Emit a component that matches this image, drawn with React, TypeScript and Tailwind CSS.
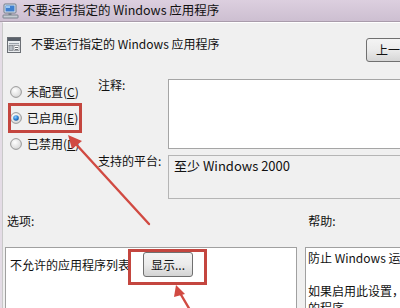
import React from "react";

const font = { fontFamily: '"Noto Sans CJK SC", "Noto Sans", sans-serif' };

function Radio({ checked }: { checked?: boolean }) {
  return (
    <svg width="12" height="12" viewBox="0 0 12 12" className="shrink-0">
      <defs>
        <radialGradient id={checked ? "rg1" : "rg0"} cx="0.4" cy="0.35" r="0.7">
          <stop offset="0" stopColor="#ffffff" />
          <stop offset="1" stopColor="#d4d4d4" />
        </radialGradient>
        <radialGradient id="dot" cx="0.4" cy="0.35" r="0.7">
          <stop offset="0" stopColor="#8fd0ff" />
          <stop offset="0.6" stopColor="#2a7fd4" />
          <stop offset="1" stopColor="#134f8e" />
        </radialGradient>
      </defs>
      <circle cx="6" cy="6" r="5.4" fill={`url(#${checked ? "rg1" : "rg0"})`} stroke="#8e8f8f" strokeWidth="0.9" />
      {checked && <circle cx="6" cy="6" r="2.8" fill="url(#dot)" />}
    </svg>
  );
}

function TitleIcon() {
  return (
    <svg width="17" height="16" viewBox="0 0 17 16">
      <rect x="2" y="1" width="12" height="9" rx="1" fill="#dfe6ee" stroke="#6c7a89" strokeWidth="1" />
      <rect x="3.5" y="2.5" width="9" height="6" fill="#3f7fd0" />
      <rect x="4" y="3" width="4" height="2" fill="#9cc8f3" />
      <rect x="6.5" y="10" width="3" height="2" fill="#7b8794" />
      <rect x="1" y="12" width="15" height="3" rx="0.5" fill="#c6ccd3" stroke="#67717c" strokeWidth="0.8" />
    </svg>
  );
}

function PolicyIcon() {
  return (
    <svg width="14" height="16" viewBox="0 0 14 16">
      <rect x="0.5" y="0.5" width="13" height="15" fill="#e9ecef" stroke="#6b6f75" strokeWidth="1" />
      <rect x="1" y="1" width="12" height="3" fill="#59606a" />
      <rect x="2" y="6" width="10" height="1.2" fill="#9aa1a9" />
      <rect x="2" y="8.5" width="4" height="5" fill="#b7bdc4" stroke="#6b6f75" strokeWidth="0.6" />
      <rect x="7" y="8.5" width="5" height="5" fill="#ffffff" stroke="#6b6f75" strokeWidth="0.6" />
      <rect x="8" y="10" width="3" height="1" fill="#6b6f75" />
      <rect x="8" y="12" width="3" height="1" fill="#6b6f75" />
    </svg>
  );
}

export default function App() {
  return (
    <div className="relative w-[400px] h-[308px] overflow-hidden bg-[#e4dce6] text-[#111]" style={font}>
      {/* Title bar */}
      <div className="h-[22px] flex items-center pl-[2px] bg-gradient-to-b from-[#dccfdf] to-[#cdbfd1] border-b border-[#a99cab]">
        <TitleIcon />
        <span className="ml-[4px] text-[12.5px] leading-none whitespace-nowrap">不要运行指定的 Windows 应用程序</span>
      </div>

      {/* Body */}
      <div className="ml-[2px] h-[286px] bg-[#f0f0f0] border-l border-t border-[#c9c9c9] border-t-white">
        {/* Header */}
        <div className="h-[56px] flex items-start">
          <div className="mt-[14px] ml-[4px]">
            <PolicyIcon />
          </div>
          <span className="ml-[10px] mt-[13px] text-[12px] leading-[16px] whitespace-nowrap">
            不要运行指定的 Windows 应用程序
          </span>
          <div className="ml-auto mt-[15px] w-[34px] h-[24px] overflow-hidden">
            <div className="w-[90px] h-[24px] rounded-[3px] border border-[#707070] bg-gradient-to-b from-[#f4f4f4] via-[#ebebeb] to-[#d6d6d6] flex items-center pl-[9px] text-[12px] whitespace-nowrap">
              上一个设置
            </div>
          </div>
        </div>

        {/* Main section */}
        <div className="flex h-[120px]">
          <div className="w-[95px] flex flex-col pl-[7px]">
            <div className="h-[26px] flex items-center gap-[5px] text-[12px]">
              <Radio />
              <span>未配置(<u>C</u>)</span>
            </div>
            <div className="h-[26px] flex items-center gap-[5px] text-[12px]">
              <Radio checked />
              <span>已启用(<u>E</u>)</span>
            </div>
            <div className="h-[26px] flex items-center gap-[5px] text-[12px]">
              <Radio />
              <span>已禁用(<u>D</u>)</span>
            </div>
          </div>
          <div className="w-[70px] flex flex-col text-[12px] leading-[12px]">
            <span className="mt-[0px]">注释:</span>
            <span className="mt-[64px] whitespace-nowrap">支持的平台:</span>
          </div>
          <div className="flex-1 flex flex-col gap-[6px]">
            <div className="h-[70px] bg-white border border-[#a5a5a5] border-r-0" />
            <div className="h-[44px] border border-[#b5b5b5] border-r-0 pl-[5px] pt-[1px] text-[13px] leading-[18px]">
              至少 Windows 2000
            </div>
          </div>
        </div>

        {/* Labels row */}
        <div className="mt-[14px] h-[16px] flex text-[12px] leading-[16px]">
          <span className="ml-[4px]">选项:</span>
          <span className="ml-[274px]">帮助:</span>
        </div>

        {/* Bottom panels */}
        <div className="mt-[18px] flex gap-[8px] pl-[2px]">
          <div className="shrink-0 w-[292px] h-[80px] bg-white border border-[#a0a0a0] flex items-start pl-[4px] pt-[4px]">
            <span className="text-[12px] leading-[26px] whitespace-nowrap">不允许的应用程序列表</span>
            <div className="ml-[13px] w-[50px] h-[25px] rounded-[3px] border border-[#707070] bg-gradient-to-b from-[#f4f4f4] via-[#ebebeb] to-[#d3d3d3] flex items-center justify-center text-[12px]">
              显示...
            </div>
          </div>
          <div className="flex-1 min-w-0 overflow-hidden h-[80px] bg-white border border-[#a0a0a0] border-r-0 pl-[2px] pt-[2px] text-[12px] leading-[16.5px] whitespace-nowrap">
            <div>防止 Windows 运行指定的程序</div>
            <div>&nbsp;</div>
            <div>如果启用此设置，则不能运行</div>
            <div>的程序</div>
          </div>
        </div>
      </div>

      {/* Red highlight boxes */}
      <div className="absolute left-[8px] top-[103px] w-[74px] h-[30px] border-[3px] border-[#c4463f]" />
      <div className="absolute left-[128px] top-[249px] w-[79px] h-[36px] border-[3px] border-[#c4463f]" />

      {/* Arrows */}
      <svg className="absolute left-0 top-0 pointer-events-none" width="400" height="308" viewBox="0 0 400 308">
        <g stroke="#d14a42" strokeWidth="2.4" fill="#d14a42" strokeLinecap="round">
          <line x1="149" y1="224" x2="74" y2="142" />
          <polygon points="68,135 82,141 72,149" stroke="none" />
          <line x1="190" y1="310" x2="180" y2="293" />
          <polygon points="176,285 185,294 174,297" stroke="none" />
        </g>
      </svg>
    </div>
  );
}
